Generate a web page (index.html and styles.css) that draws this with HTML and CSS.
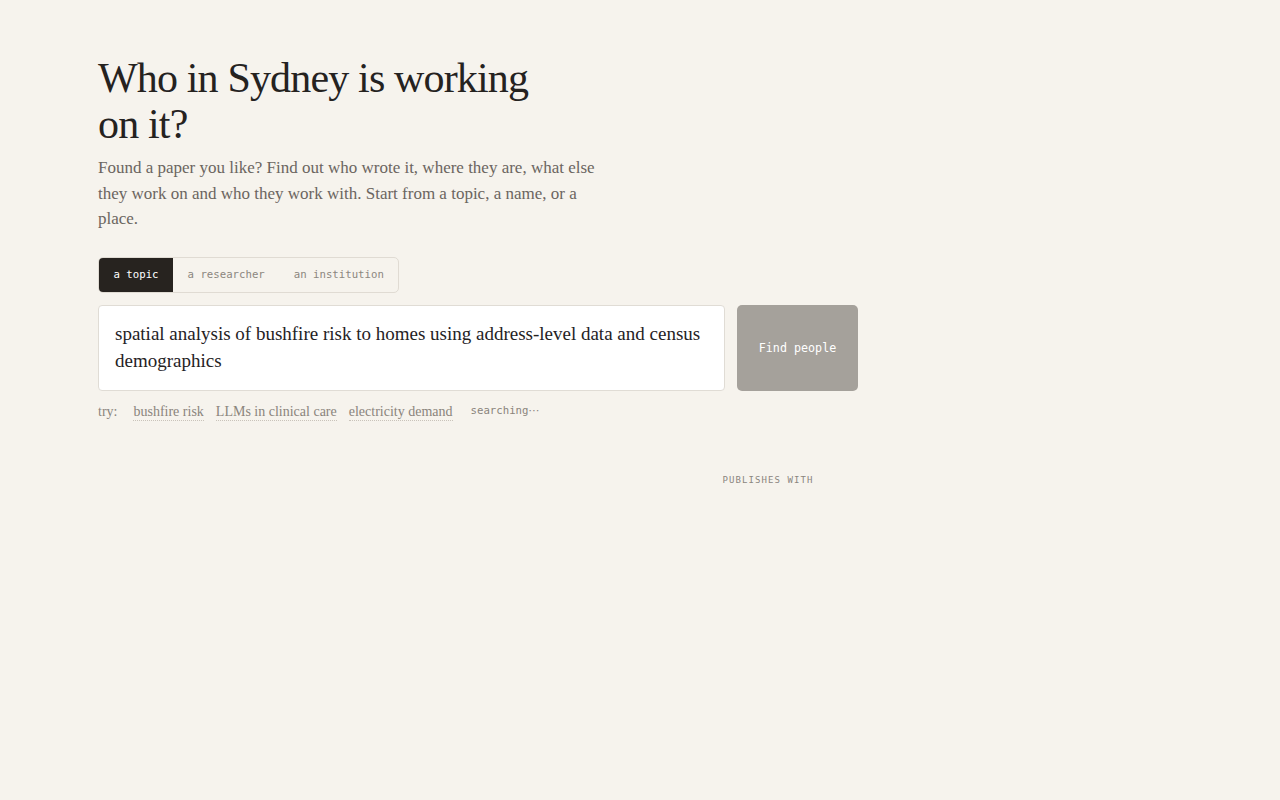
FILE: index.html
```html
<!DOCTYPE html>
<html lang="en">
<head>
<meta charset="utf-8"/>
<title>Who in Sydney is working on it?</title>
<link rel="stylesheet" href="styles.css">
</head>
<body>
<main class="page">
  <h1 class="title">Who in Sydney is working<br/>on it?</h1>
  <p class="lede">Found a paper you like? Find out who wrote it, where they are, what else they work on and who they work with. Start from a topic, a name, or a place.</p>

  <div class="modes">
    <button class="mode active">a topic</button>
    <button class="mode">a researcher</button>
    <button class="mode">an institution</button>
  </div>

  <div class="search">
    <div class="query">spatial analysis of bushfire risk to homes using address-level data and census demographics</div>
    <button class="go">Find people</button>
  </div>

  <div class="tries">
    <span class="try-label">try:</span>
    <a class="try">bushfire risk</a>
    <a class="try">LLMs in clinical care</a>
    <a class="try">electricity demand</a>
    <span class="status">searching<span class="dots">⋯</span></span>
  </div>

  <div class="results">
    <div class="col-main"></div>
    <div class="col-side">
      <h3 class="side-label">Publishes with</h3>
    </div>
  </div>
</main>
</body>
</html>
```

FILE: styles.css
```css
body {
    margin: 0;
    background-color: #f6f3ed;
    color: #25221f;
    font-family: "Liberation Serif", "Times New Roman", serif;
}
.page {
    width: 760px;
    padding: 55px 0 0 98px;
}
.title {
    font-size: 42px;
    font-weight: normal;
    line-height: 46px;
    letter-spacing: -0.02em;
    margin: 0 0 8px;
}
.lede {
    font-size: 17px;
    line-height: 25.5px;
    color: #6b6560;
    max-width: 510px;
    margin: 0 0 25px;
}
.modes {
    display: inline-flex;
    border: 1px solid #e0dbd3;
    border-radius: 5px;
    overflow: hidden;
    margin-bottom: 12px;
}
.mode {
    font-family: "DejaVu Sans Mono", monospace;
    font-size: 10.7px;
    color: #8c877f;
    background: none;
    border: none;
    padding: 0 14.5px;
    height: 34px;
    cursor: pointer;
}
.mode.active {
    background-color: #27231f;
    color: #fff;
}
.search {
    display: flex;
    gap: 12px;
}
.query {
    flex: 1;
    background: #fff;
    border: 1px solid #e0dcd5;
    border-radius: 4px;
    padding: 14px 16px;
    font-size: 19px;
    line-height: 27.5px;
    min-height: 56px;
}
.go {
    width: 121px;
    background-color: #a5a19b;
    color: #fff;
    border: none;
    border-radius: 5px;
    font-family: "DejaVu Sans Mono", monospace;
    font-size: 11.7px;
    cursor: pointer;
}
.tries {
    display: flex;
    align-items: baseline;
    gap: 12px;
    margin-top: 13px;
    font-size: 14px;
    color: #8a847c;
}
.try-label {
    margin-right: 4px;
}
.try {
    color: #8a847c;
    border-bottom: 1px dotted #c9c3ba;
    cursor: pointer;
}
.status {
    font-family: "DejaVu Sans Mono", monospace;
    font-size: 10.7px;
    margin-left: 6px;
    position: relative;
    top: -2px;
}
.dots {
    font-family: "DejaVu Sans", sans-serif;
    font-size: 11px;
}
.results {
    display: grid;
    grid-template-columns: 1fr 180px;
    margin-top: 54px;
}
.side-label {
    font-family: "DejaVu Sans Mono", monospace;
    font-size: 9px;
    font-weight: normal;
    letter-spacing: 0.12em;
    text-transform: uppercase;
    color: #8a857e;
    text-align: center;
    margin: 0;
}
```
